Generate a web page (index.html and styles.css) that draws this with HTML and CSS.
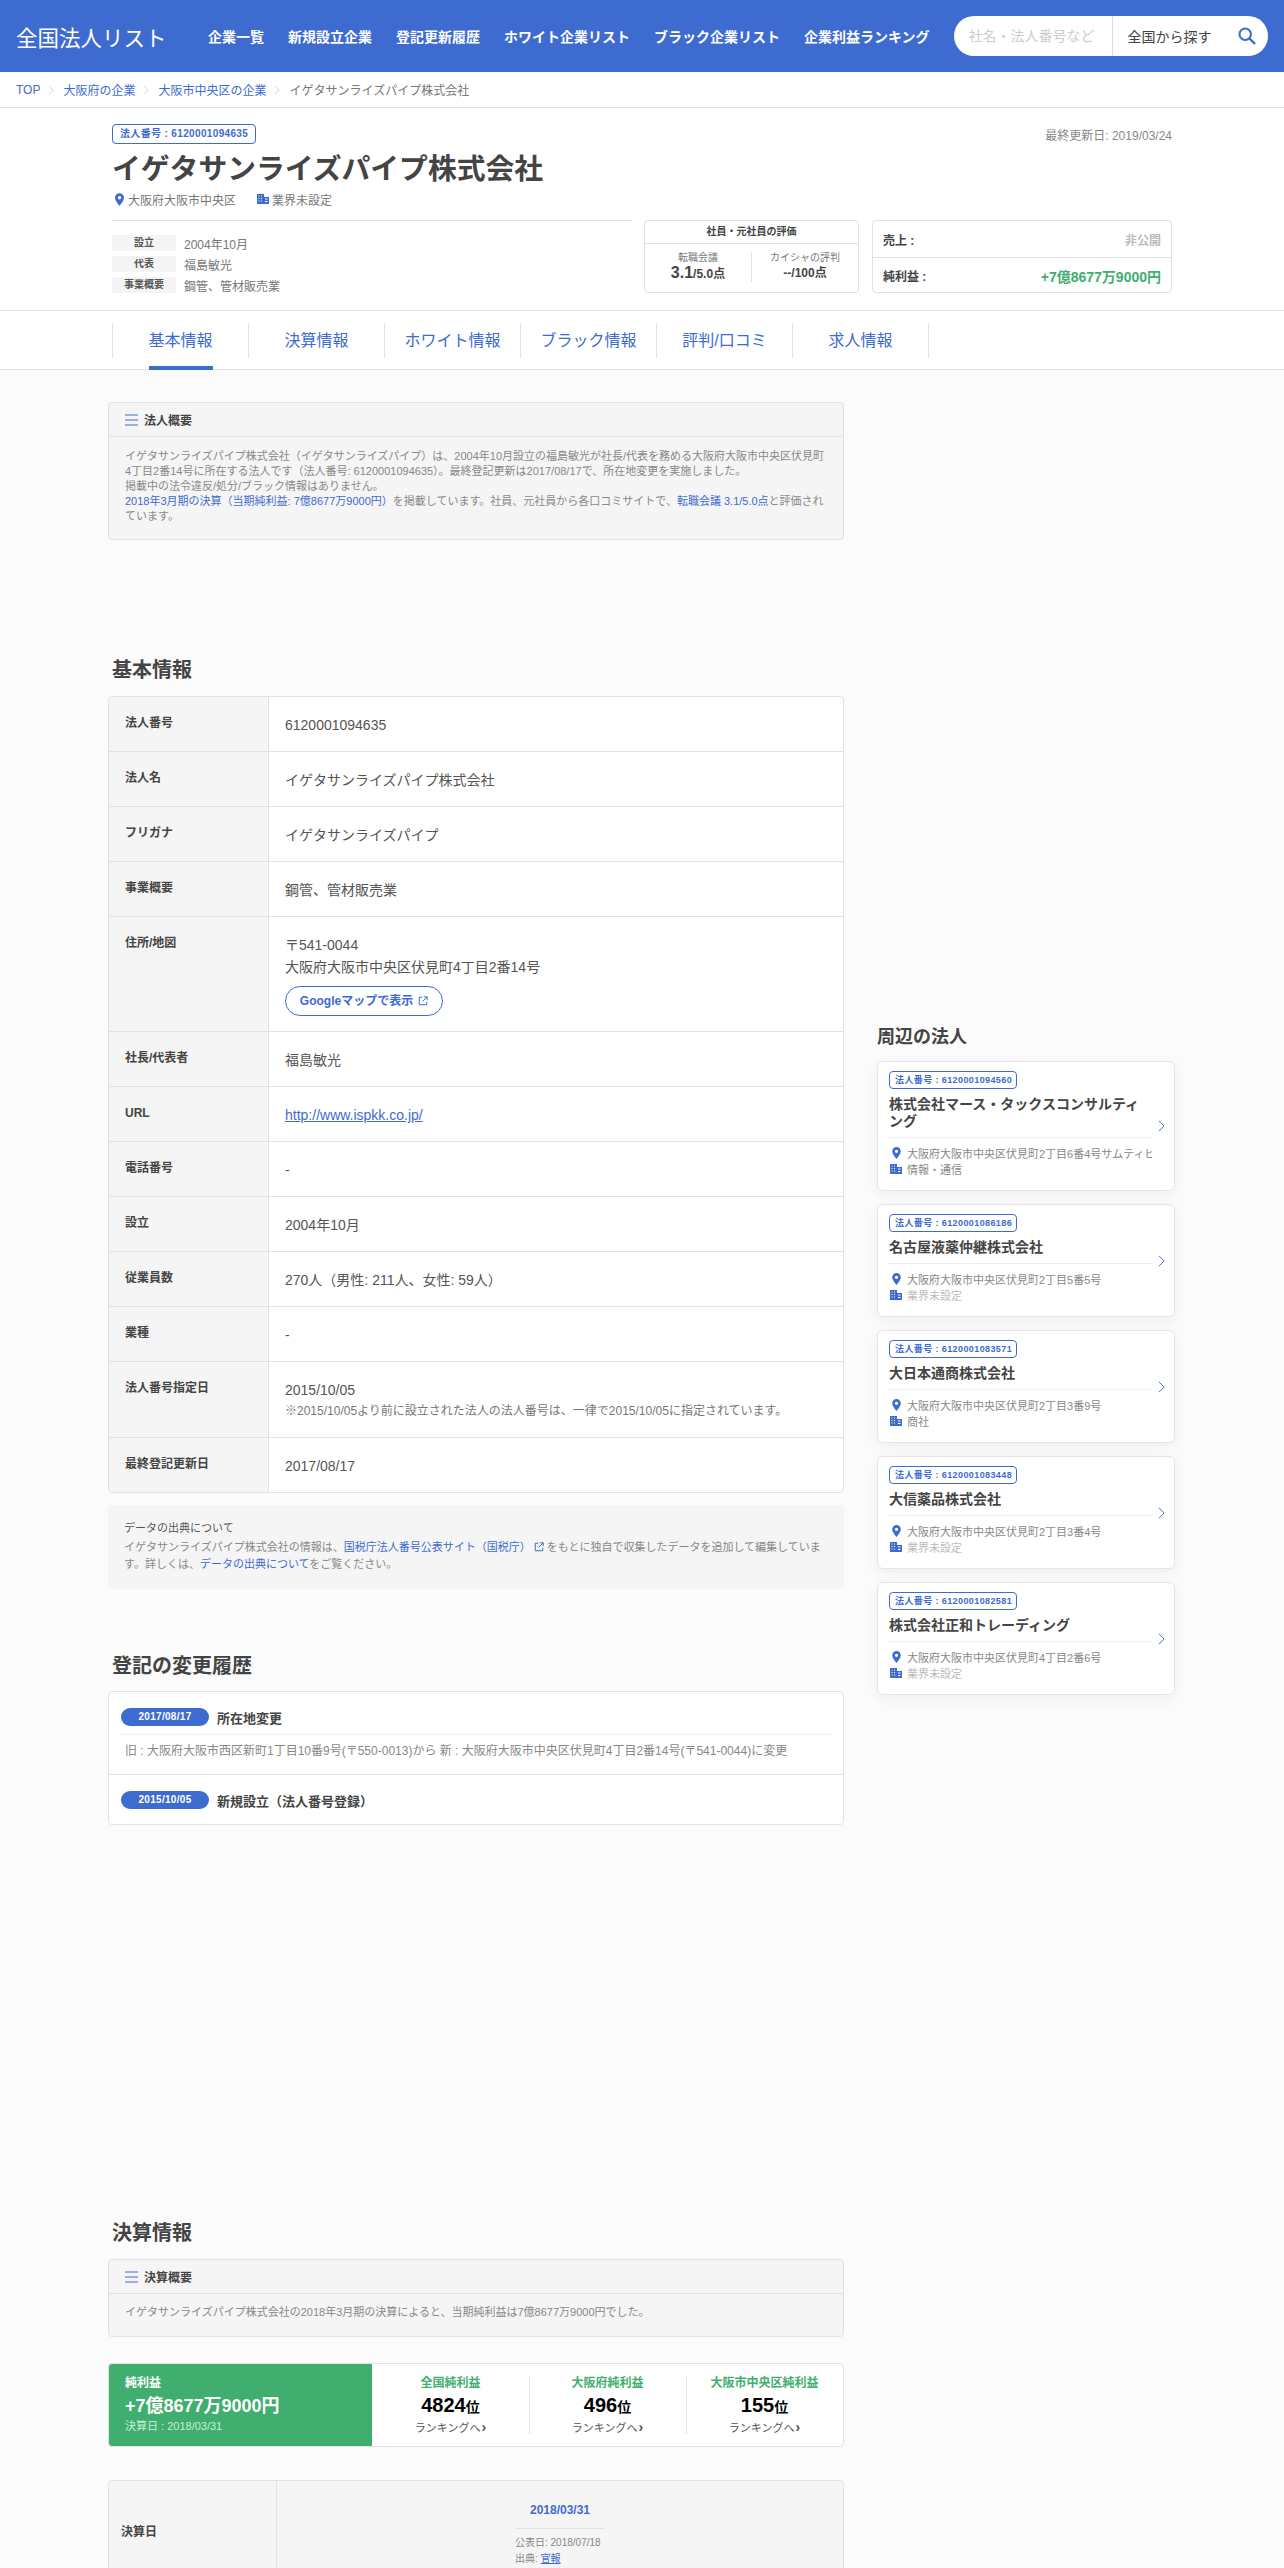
FILE: index.html
```html
<!DOCTYPE html>
<html lang="ja">
<head>
<meta charset="utf-8">
<title>イゲタサンライズパイプ株式会社</title>
<link rel="stylesheet" href="styles.css">
</head>
<body>
<svg class="defs" width="0" height="0" aria-hidden="true">
  <symbol id="pin" viewBox="0 0 10 14"><path fill-rule="evenodd" d="M5 0a5 5 0 0 1 5 5c0 3.5-5 9-5 9S0 8.500 0 5a5 5 0 0 1 5-5zm0 3.200a1.900 1.900 0 1 0 0 3.800 1.900 1.900 0 0 0 0-3.800z"/></symbol>
  <symbol id="bld" viewBox="0 0 12 10"><path fill-rule="evenodd" d="M0 0h7v3h5v7H0zM1.500 1.500v1h1v-1zm2.500 0v1h1v-1zm-2.500 2.500v1h1v-1zm2.500 0v1h1v-1zm-2.500 2.500v1h1v-1zm2.500 0v1h1v-1zM8 4.500v1h2.500v-1zm0 2.500v1h2.500V7z"/></symbol>
  <symbol id="menu" viewBox="0 0 13 12"><path d="M0 1h13M0 6h13M0 11h13" fill="none" stroke="currentColor" stroke-width="1"/></symbol>
  <symbol id="ext" viewBox="0 0 12 12"><path d="M5 1.500H1.500v9h9V7M7 1h4v4M11 1 5.500 6.500" fill="none" stroke="currentColor" stroke-width="1.200"/></symbol>
  <symbol id="chev" viewBox="0 0 8 14"><path d="M1 1l6 6-6 6" fill="none" stroke="currentColor" stroke-width="1.100"/></symbol>
</svg>
<div class="page">
<header class="site-header">
  <a class="logo">全国法人リスト</a>
  <nav class="global-nav">
    <a>企業一覧</a><a>新規設立企業</a><a>登記更新履歴</a><a>ホワイト企業リスト</a><a>ブラック企業リスト</a><a>企業利益ランキング</a>
  </nav>
  <div class="search">
    <span class="search-input">社名・法人番号など</span>
    <span class="search-area">全国から探す</span>
    <svg class="search-icon" viewBox="0 0 18 18" width="18" height="18"><circle cx="7.200" cy="7.200" r="5.700" fill="none" stroke="currentColor" stroke-width="2"/><path d="M11.500 11.500 17 17" stroke="currentColor" stroke-width="2.400" fill="none"/></svg>
  </div>
</header>
<div class="breadcrumb">
  <a>TOP</a><svg class="bc-sep"><use href="#chev"/></svg><a>大阪府の企業</a><svg class="bc-sep"><use href="#chev"/></svg><a>大阪市中央区の企業</a><svg class="bc-sep"><use href="#chev"/></svg><span>イゲタサンライズパイプ株式会社</span>
</div>
<section class="company">
  <div class="company-top">
    <span class="badge">法人番号 : 6120001094635</span>
    <span class="updated">最終更新日: 2019/03/24</span>
  </div>
  <h1>イゲタサンライズパイプ株式会社</h1>
  <div class="meta">
    <svg class="i-pin"><use href="#pin"/></svg><span class="meta-loc">大阪府大阪市中央区</span>
    <svg class="i-bld"><use href="#bld"/></svg><span>業界未設定</span>
  </div>
  <div class="company-bottom">
    <dl class="facts">
      <div><dt>設立</dt><dd>2004年10月</dd></div>
      <div><dt>代表</dt><dd>福島敏光</dd></div>
      <div><dt>事業概要</dt><dd>鋼管、管材販売業</dd></div>
    </dl>
    <div class="eval">
      <div class="eval-title">社員・元社員の評価</div>
      <div class="eval-cols">
        <div class="eval-col"><small>転職会議</small><p><b>3.1</b>/5.0点</p></div>
        <div class="eval-col"><small>カイシャの評判</small><p><b>--</b>/100点</p></div>
      </div>
    </div>
    <div class="money">
      <div class="money-row"><b>売上 :</b><span class="muted">非公開</span></div>
      <div class="money-row"><b>純利益 :</b><span class="plus">+7億8677万9000円</span></div>
    </div>
  </div>
</section>
<nav class="tabs">
  <a class="active">基本情報</a><a>決算情報</a><a>ホワイト情報</a><a>ブラック情報</a><a>評判/口コミ</a><a>求人情報</a>
</nav>
<main class="layout">
  <div class="col-main">
    <section class="summary">
      <h3><svg><use href="#menu"/></svg>法人概要</h3>
      <p>イゲタサンライズパイプ株式会社（イゲタサンライズパイプ）は、2004年10月設立の福島敏光が社長/代表を務める大阪府大阪市中央区伏見町4丁目2番14号に所在する法人です（法人番号: 6120001094635）。最終登記更新は2017/08/17で、所在地変更を実施しました。<br>掲載中の法令違反/処分/ブラック情報はありません。<br><a>2018年3月期の決算（当期純利益: 7億8677万9000円）</a>を掲載しています。社員、元社員から各口コミサイトで、<a>転職会議 3.1/5.0点</a>と評価されています。</p>
    </section>

    <h2 class="first">基本情報</h2>
    <div class="info-table">
      <div class="row"><div class="th">法人番号</div><div class="td">6120001094635</div></div>
      <div class="row"><div class="th">法人名</div><div class="td">イゲタサンライズパイプ株式会社</div></div>
      <div class="row"><div class="th">フリガナ</div><div class="td">イゲタサンライズパイプ</div></div>
      <div class="row"><div class="th">事業概要</div><div class="td">鋼管、管材販売業</div></div>
      <div class="row"><div class="th">住所/地図</div><div class="td">〒541-0044<br>大阪府大阪市中央区伏見町4丁目2番14号<br><a class="map-btn">Googleマップで表示<svg><use href="#ext"/></svg></a></div></div>
      <div class="row"><div class="th">社長/代表者</div><div class="td">福島敏光</div></div>
      <div class="row"><div class="th">URL</div><div class="td"><a class="ul">http://www.ispkk.co.jp/</a></div></div>
      <div class="row"><div class="th">電話番号</div><div class="td">-</div></div>
      <div class="row"><div class="th">設立</div><div class="td">2004年10月</div></div>
      <div class="row"><div class="th">従業員数</div><div class="td">270人（男性: 211人、女性: 59人）</div></div>
      <div class="row"><div class="th">業種</div><div class="td">-</div></div>
      <div class="row"><div class="th">法人番号指定日</div><div class="td">2015/10/05<p class="note">※2015/10/05より前に設立された法人の法人番号は、一律で2015/10/05に指定されています。</p></div></div>
      <div class="row"><div class="th">最終登記更新日</div><div class="td">2017/08/17</div></div>
    </div>
    <aside class="source">
      <h4>データの出典について</h4>
      <p>イゲタサンライズパイプ株式会社の情報は、<a>国税庁法人番号公表サイト（国税庁）<svg><use href="#ext"/></svg></a>をもとに独自で収集したデータを追加して編集しています。詳しくは、<a>データの出典について</a>をご覧ください。</p>
    </aside>

    <h2 class="second">登記の変更履歴</h2>
    <div class="history">
      <div class="hist-item">
        <div class="hist-head"><span class="pill">2017/08/17</span><b>所在地変更</b></div>
        <p>旧 : 大阪府大阪市西区新町1丁目10番9号(〒550-0013)から 新 : 大阪府大阪市中央区伏見町4丁目2番14号(〒541-0044)に変更</p>
      </div>
      <div class="hist-item">
        <div class="hist-head"><span class="pill">2015/10/05</span><b>新規設立（法人番号登録）</b></div>
      </div>
    </div>

    <h2 class="third">決算情報</h2>
    <section class="summary">
      <h3><svg><use href="#menu"/></svg>決算概要</h3>
      <p class="single">イゲタサンライズパイプ株式会社の2018年3月期の決算によると、当期純利益は7億8677万9000円でした。</p>
    </section>
    <div class="profit">
      <div class="profit-main">
        <b>純利益</b>
        <strong>+7億8677万9000円</strong>
        <small>決算日 : 2018/03/31</small>
      </div>
      <div class="rank"><h5>全国純利益</h5><p>4824<i>位</i></p><a>ランキングへ<b>›</b></a></div>
      <div class="rank"><h5>大阪府純利益</h5><p>496<i>位</i></p><a>ランキングへ<b>›</b></a></div>
      <div class="rank"><h5>大阪市中央区純利益</h5><p>155<i>位</i></p><a>ランキングへ<b>›</b></a></div>
    </div>
    <div class="fin-table">
      <div class="fin-th">決算日</div>
      <div class="fin-td">
        <a class="fin-date">2018/03/31</a>
        <div class="fin-meta"><p>公表日: 2018/07/18</p><p>出典: <a class="ul">官報</a></p></div>
      </div>
    </div>
  </div>

  <aside class="col-side">
    <h2 class="side-title">周辺の法人</h2>
    <article class="near">
      <div class="near-body">
        <span class="badge small">法人番号 : 6120001094560</span>
        <h4>株式会社マース・タックスコンサルティング</h4>
        <div class="near-line"><svg class="i-pin"><use href="#pin"/></svg><span>大阪府大阪市中央区伏見町2丁目6番4号サムティビル</span></div>
        <div class="near-line"><svg class="i-bld"><use href="#bld"/></svg><span>情報・通信</span></div>
      </div>
      <svg class="near-chev"><use href="#chev"/></svg>
    </article>
    <article class="near">
      <div class="near-body">
        <span class="badge small">法人番号 : 6120001086186</span>
        <h4>名古屋液薬仲継株式会社</h4>
        <div class="near-line"><svg class="i-pin"><use href="#pin"/></svg><span>大阪府大阪市中央区伏見町2丁目5番5号</span></div>
        <div class="near-line"><svg class="i-bld"><use href="#bld"/></svg><span class="none">業界未設定</span></div>
      </div>
      <svg class="near-chev"><use href="#chev"/></svg>
    </article>
    <article class="near">
      <div class="near-body">
        <span class="badge small">法人番号 : 6120001083571</span>
        <h4>大日本通商株式会社</h4>
        <div class="near-line"><svg class="i-pin"><use href="#pin"/></svg><span>大阪府大阪市中央区伏見町2丁目3番9号</span></div>
        <div class="near-line"><svg class="i-bld"><use href="#bld"/></svg><span>商社</span></div>
      </div>
      <svg class="near-chev"><use href="#chev"/></svg>
    </article>
    <article class="near">
      <div class="near-body">
        <span class="badge small">法人番号 : 6120001083448</span>
        <h4>大信薬品株式会社</h4>
        <div class="near-line"><svg class="i-pin"><use href="#pin"/></svg><span>大阪府大阪市中央区伏見町2丁目3番4号</span></div>
        <div class="near-line"><svg class="i-bld"><use href="#bld"/></svg><span class="none">業界未設定</span></div>
      </div>
      <svg class="near-chev"><use href="#chev"/></svg>
    </article>
    <article class="near">
      <div class="near-body">
        <span class="badge small">法人番号 : 6120001082581</span>
        <h4>株式会社正和トレーディング</h4>
        <div class="near-line"><svg class="i-pin"><use href="#pin"/></svg><span>大阪府大阪市中央区伏見町4丁目2番6号</span></div>
        <div class="near-line"><svg class="i-bld"><use href="#bld"/></svg><span class="none">業界未設定</span></div>
      </div>
      <svg class="near-chev"><use href="#chev"/></svg>
    </article>
  </aside>
</main>
</div>
</body>
</html>
```
FILE: styles.css
```css
* { box-sizing: border-box; }
html, body { margin: 0; padding: 0; }
body {
  font-family: "Liberation Sans", "Noto Sans CJK JP", sans-serif;
  color: #444;
  background: #fbfbfb;
  font-size: 12px;
}
h1, h2, h3, h4, h5, p, dl, dd, dt { margin: 0; padding: 0; }
a { color: #3e6bcf; text-decoration: none; }
.defs { position: absolute; }
.page { height: 2568px; overflow: hidden; }

/* header */
.site-header {
  height: 72px;
  background: #3e6bcf;
  display: flex;
  align-items: center;
  padding: 0 16px;
}
.logo {
  color: #fff;
  font-size: 21.500px;
  font-weight: 400;
  width: 192px;
  white-space: nowrap;
  flex: none;
}
.global-nav { display: flex; gap: 24px; flex: none; }
.global-nav a { color: #fff; font-size: 14px; font-weight: 700; white-space: nowrap; }
.search {
  margin-left: 24px;
  width: 314px;
  height: 40px;
  background: #fff;
  border-radius: 20px;
  display: flex;
  align-items: center;
  flex: none;
  font-size: 14px;
}
.search-input { color: #ccc; width: 159px; padding-left: 15px; line-height: 40px; border-right: 1px solid #ddd; white-space: nowrap; }
.search-area { color: #444; padding-left: 15px; width: 125px; }
.search-icon { color: #3e6bcf; flex: none; }

/* breadcrumb */
.breadcrumb {
  height: 36px;
  background: #fff;
  border-bottom: 1px solid #e2e2e2;
  display: flex;
  align-items: center;
  padding-left: 16px;
  color: #777;
  font-size: 12px;
}
.bc-sep { width: 6px; height: 12px; margin: 0 9px 0 8px; color: #ccc; }

/* company */
.company {
  background: #fff;
  padding: 16px 112px 0;
  height: 203px;
  border-bottom: 1px solid #e2e2e2;
}
.company-top { display: flex; justify-content: space-between; align-items: center; }
.badge {
  display: inline-block;
  border: 1px solid #3e6bcf;
  border-radius: 4px;
  color: #3e6bcf;
  font-size: 10px;
  font-weight: 700;
  letter-spacing: .35px;
  line-height: 18px;
  padding: 0 7px;
  white-space: nowrap;
}
.updated { color: #888; font-size: 12px; }
h1 { font-size: 28.800px; line-height: 36px; color: #444; margin-top: 7px; white-space: nowrap; }
.meta { display: flex; align-items: center; height: 18px; margin-top: 3px; color: #777; font-size: 12px; }
.i-pin { width: 9px; height: 13px; fill: #3e6bcf; flex: none; margin: 0 4px 0 3px; }
.i-bld { width: 12px; height: 10px; fill: #3e6bcf; flex: none; margin-right: 3px; }
.meta-loc { margin-right: 21px; }
.company-bottom { display: flex; align-items: flex-start; margin-top: 12px; }
.facts {
  width: 520px;
  height: 73px;
  border-top: 1px solid #e2e2e2;
  padding-top: 14px;
  margin-right: 12px;
  flex: none;
}
.facts div { display: flex; align-items: center; height: 16px; margin-bottom: 5px; }
.facts dt { width: 64px; height: 16px; line-height: 16px; background: #f4f4f4; color: #555; font-size: 10px; font-weight: 700; text-align: center; margin-right: 8px; }
.facts dd { color: #777; font-size: 12px; }
.eval {
  width: 215px;
  height: 73px;
  border: 1px solid #e2e2e2;
  border-radius: 4px;
  margin-right: 13px;
  flex: none;
}
.eval-title { height: 23px; line-height: 22px; text-align: center; font-size: 10px; font-weight: 700; border-bottom: 1px solid #e2e2e2; }
.eval-cols { display: flex; padding-top: 8px; }
.eval-col { flex: 1; text-align: center; height: 30px; }
.eval-col + .eval-col { border-left: 1px solid #e2e2e2; }
.eval-col small { display: block; color: #777; font-size: 10px; line-height: 12px; }
.eval-col p { font-size: 12px; line-height: 18px; font-weight: 700; }
.eval-col b { font-size: 16px; }
.eval-col + .eval-col b { font-size: 12px; }
.money {
  width: 300px;
  height: 73px;
  border: 1px solid #e2e2e2;
  border-radius: 4px;
  flex: none;
}
.money-row { display: flex; justify-content: space-between; align-items: center; padding: 0 10px; height: 36px; font-size: 12px; }
.money-row + .money-row { border-top: 1px solid #e2e2e2; }
.muted { color: #bbb; font-weight: 700; }
.plus { color: #40ae6f; font-size: 14px; font-weight: 700; }

/* tabs */
.tabs {
  background: #fff;
  height: 59px;
  padding: 12px 0 0 112px;
  display: flex;
  align-items: flex-start;
  border-bottom: 1px solid #e2e2e2;
}
.tabs a {
  width: 136px;
  height: 35px;
  border-left: 1px solid #e2e2e2;
  font-size: 16px;
  text-align: center;
  line-height: 36px;
  position: relative;
}
.tabs a:last-child { border-right: 1px solid #e2e2e2; width: 137px; }
.tabs a.active::after {
  content: "";
  position: absolute;
  left: 36px;
  top: 43px;
  width: 64px;
  height: 4px;
  background: #3e6bcf;
}

/* layout */
.layout {
  display: grid;
  grid-template-columns: 736px 298px;
  column-gap: 33px;
  margin-left: 108px;
  padding-top: 32px;
}
.summary {
  background: #f5f5f5;
  border: 1px solid #e2e2e2;
  border-radius: 4px;
}
.summary h3 {
  display: flex;
  align-items: center;
  height: 34px;
  padding-left: 16px;
  font-size: 12px;
  font-weight: 700;
  border-bottom: 1px solid #e2e2e2;
}
.summary h3 svg { width: 13px; height: 12px; margin-right: 6px; color: #3e6bcf; }
.summary p { padding: 12px 16px 15px; font-size: 11px; line-height: 15px; color: #888; }
.summary p.single { padding: 11px 16px 16px; }
h2 { font-size: 20px; line-height: 28px; color: #444; padding-left: 4px; }
h2.first { margin-top: 116px; margin-bottom: 12px; }
h2.second { margin-top: 63px; margin-bottom: 11px; }
h2.third { margin-top: 394px; margin-bottom: 12px; }

.info-table {
  background: #fff;
  border: 1px solid #e2e2e2;
  border-radius: 4px;
  overflow: hidden;
}
.row { display: flex; border-top: 1px solid #e2e2e2; }
.row:first-child { border-top: 0; }
.th {
  width: 160px;
  flex: none;
  background: #f5f5f5;
  border-right: 1px solid #e2e2e2;
  padding: 19px 16px 0;
  font-size: 12px;
  line-height: 14px;
  font-weight: 700;
}
.td { flex: 1; padding: 17px 16px 15px; font-size: 14px; line-height: 22px; color: #555; }
.ul { text-decoration: underline; }
.map-btn {
  display: inline-flex;
  align-items: center;
  justify-content: center;
  gap: 5px;
  width: 158px;
  height: 30px;
  margin-top: 8px;
  border: 1px solid #3e6bcf;
  border-radius: 15px;
  font-size: 12px;
  font-weight: 700;
  vertical-align: top;
}
.map-btn svg { width: 10px; height: 10px; }
.note { font-size: 12px; line-height: 21px; color: #777; }
.source {
  background: #f5f5f5;
  border-radius: 4px;
  margin-top: 12px;
  height: 84px;
  padding: 15px 16px 0;
  color: #888;
  font-size: 11px;
}
.source h4 { font-size: 11px; line-height: 17px; font-weight: 400; color: #555; }
.source p { line-height: 17px; margin-top: 2px; }
.source svg { width: 10px; height: 10px; margin: 0 3px 0 3px; vertical-align: -1px; }

.history {
  background: #fff;
  border: 1px solid #e2e2e2;
  border-radius: 4px;
}
.hist-item { padding: 16px 12px 0; }
.hist-item + .hist-item { border-top: 1px solid #e2e2e2; height: 50px; }
.hist-item:first-child { height: 82px; }
.hist-head { display: flex; align-items: center; gap: 8px; height: 18px; font-size: 13px; }
.hist-head b { font-weight: 700; }
.pill { width: 88px; height: 18px; line-height: 18px; border-radius: 9px; background: #3e6bcf; color: #fff; font-size: 10px; text-align: center; font-weight: 700; letter-spacing: .3px; }
.hist-item p { margin-top: 8px; border-top: 1px dotted #ddd; padding: 7px 4px 0; font-size: 12px; line-height: 18px; color: #888; white-space: nowrap; }

.profit {
  margin-top: 26px;
  height: 84px;
  background: #fff;
  border: 1px solid #e2e2e2;
  border-radius: 4px;
  display: flex;
  overflow: hidden;
}
.profit-main {
  width: 263px;
  flex: none;
  background: #40ae6f;
  color: #fff;
  padding: 10px 16px 0;
  display: flex;
  flex-direction: column;
}
.profit-main b { font-size: 12px; line-height: 18px; }
.profit-main strong { font-size: 18px; line-height: 28px; }
.profit-main small { font-size: 11px; line-height: 14px; margin-top: -1px; color: #c8eed7; }
.rank { flex: 1; text-align: center; padding-top: 10px; position: relative; }
.rank + .rank::before { content: ""; position: absolute; left: 0; top: 12px; bottom: 12px; border-left: 1px solid #e2e2e2; }
.rank h5 { font-size: 12px; line-height: 18px; color: #40ae6f; font-weight: 700; }
.rank p { font-size: 20px; line-height: 26px; font-weight: 700; color: #000; }
.rank i { font-style: normal; font-size: 14px; }
.rank a { display: block; color: #555; font-size: 11px; line-height: 16px; }
.rank a b { font-size: 14px; line-height: 10px; margin-left: 1px; }

.fin-table {
  margin-top: 33px;
  height: 120px;
  display: flex;
  background: #f5f5f5;
  border: 1px solid #e2e2e2;
  border-radius: 4px;
}
.fin-th { width: 168px; flex: none; padding: 42px 12px 0; font-size: 12px; font-weight: 700; line-height: 18px; border-right: 1px solid #e2e2e2; }
.fin-td { flex: 1; text-align: center; padding-top: 21px; }
.fin-date { display: block; font-size: 12px; font-weight: 700; line-height: 16px; }
.fin-meta { width: 90px; margin: 10px auto 0; border-top: 1px solid #e2e2e2; padding-top: 6px; color: #888; font-size: 10px; line-height: 16px; text-align: left; }

/* sidebar */
.col-side { padding-top: 623px; }
h2.side-title { font-size: 18px; line-height: 24px; padding-left: 0; margin-bottom: 12px; }
.near {
  position: relative;
  background: #fff;
  border: 1px solid #e4e4e4;
  border-radius: 6px;
  box-shadow: 0 4px 14px rgba(0, 0, 0, .05);
  margin-bottom: 13px;
  padding: 9px 11px 13px;
}
.near-body { width: 263px; }
.badge.small { display: block; width: 128px; line-height: 16px; padding: 0 5px; font-size: 9px; letter-spacing: .4px; }
.near h4 { font-size: 14px; line-height: 17px; margin-top: 7px; padding-bottom: 7px; border-bottom: 1px dotted #ddd; color: #444; }
.near-line { display: flex; align-items: center; height: 16px; font-size: 11px; color: #888; white-space: nowrap; overflow: hidden; }
.near h4 + .near-line { margin-top: 7px; }
.near-line .i-pin { width: 9px; height: 12px; margin: 0 6px 0 3px; }
.near-line .i-bld { width: 12px; height: 10px; margin: 0 5px 0 1px; }
.near-line .none { color: #bbb; }
.near-chev { position: absolute; right: 9px; top: 50%; width: 7px; height: 12px; margin-top: -6px; color: #3e6bcf; }
```
